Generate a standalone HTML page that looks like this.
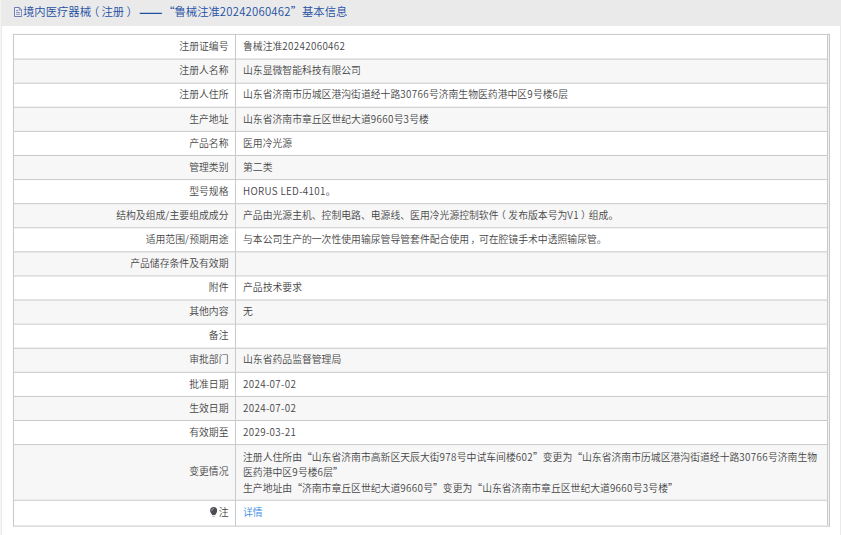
<!DOCTYPE html>
<html lang="zh-CN"><head><meta charset="utf-8"><title>基本信息</title>
<style>
html,body{margin:0;padding:0}
body{width:841px;height:535px;overflow:hidden;background:#eaeaea;position:relative;font-family:"Liberation Sans","Noto Sans CJK SC",sans-serif;font-size:9.83px;color:#454545;font-weight:350}
.n{font-family:"Noto Sans CJK SC","Liberation Sans",sans-serif;letter-spacing:0.33px}
q{quotes:none;font-family:"Noto Sans CJK SC",sans-serif}
q:before,q:after{content:""}
.edge{position:absolute;left:0;top:0;width:1px;height:535px;background:#f4f4f4}
.title{position:absolute;left:23px;top:0;height:24px;line-height:23px;font-size:11.35px;color:#1f4fa3;white-space:nowrap}
.ico{position:absolute;left:13.5px;top:6.8px}
.box{position:absolute;left:2px;top:26px;width:838px;height:509px;background:#fff}
.grid{position:absolute;left:0;top:0}
.r{position:absolute;left:0;width:841px;height:24.1px;white-space:nowrap}
.k{position:absolute;left:14px;top:0;width:214.5px;height:100%;text-align:right;line-height:25.1px}
.v{position:absolute;left:243px;top:0;right:14px;height:100%;line-height:25.1px}
.v.m{line-height:15.5px;padding-top:5.7px;box-sizing:border-box}
.lk{color:#3a8ee6}
.bulb{position:absolute;left:209.7px;top:506.7px}
.pl,.pr{position:relative}
.pl{left:-0.27em}
.pr{left:0.2em}
.d{font-weight:500;margin-left:3.2px;margin-right:4.05px;display:inline-block;transform:scale(1.227,1.5);transform-origin:0 50%}
.title .pl{margin-right:-0.9px}
.sp{letter-spacing:-1.95px}
.title .n{letter-spacing:0.21px}
.cm{position:relative;left:0.15em}
</style></head><body>
<div class="edge"></div>
<svg class="ico" width="8.2" height="10" viewBox="0 0 8.2 10"><path d="M0.45 0.5 H5.3 L7.75 2.95 V9.5 H0.45 Z" fill="#eef0f6" stroke="#56679f" stroke-width="0.85"/><path d="M5.2 0.6 V3.1 H7.7" fill="none" stroke="#56679f" stroke-width="0.7"/><path d="M2 3.5 H4.2 M2 5.4 H6.2 M2 7.3 H6.2" stroke="#6a79ab" stroke-width="0.8"/></svg>
<div class="title">境内医疗器械<span class="pl">（</span>注册<span class="pr">）</span><q class="d">——</q><span class="sp"> </span><q>“</q>鲁械注准<span class="n">20242060462</span><q>”</q>基本信息</div>
<div class="box"></div>

<svg class="grid" width="841" height="535" viewBox="0 0 841 535" shape-rendering="auto">
<rect x="13" y="58.60" width="814" height="24.09" fill="#f7f7f7"/>
<rect x="13" y="106.79" width="814" height="24.09" fill="#f7f7f7"/>
<rect x="13" y="154.98" width="814" height="24.09" fill="#f7f7f7"/>
<rect x="13" y="203.16" width="814" height="24.09" fill="#f7f7f7"/>
<rect x="13" y="251.35" width="814" height="24.09" fill="#f7f7f7"/>
<rect x="13" y="299.54" width="814" height="24.09" fill="#f7f7f7"/>
<rect x="13" y="347.73" width="814" height="24.09" fill="#f7f7f7"/>
<rect x="13" y="395.92" width="814" height="24.09" fill="#f7f7f7"/>
<rect x="13" y="444.10" width="814" height="55.65" fill="#f7f7f7"/>
<rect x="828" y="33.90" width="1" height="491.70" fill="#f3f3f6"/>
<rect x="13" y="33.90" width="817" height="1" fill="#c9c9c9"/>
<rect x="13" y="58.60" width="815" height="1" fill="#c9c9c9"/>
<rect x="13" y="82.69" width="815" height="1" fill="#c9c9c9"/>
<rect x="13" y="106.79" width="815" height="1" fill="#c9c9c9"/>
<rect x="13" y="130.88" width="815" height="1" fill="#c9c9c9"/>
<rect x="13" y="154.98" width="815" height="1" fill="#c9c9c9"/>
<rect x="13" y="179.07" width="815" height="1" fill="#c9c9c9"/>
<rect x="13" y="203.16" width="815" height="1" fill="#c9c9c9"/>
<rect x="13" y="227.26" width="815" height="1" fill="#c9c9c9"/>
<rect x="13" y="251.35" width="815" height="1" fill="#c9c9c9"/>
<rect x="13" y="275.45" width="815" height="1" fill="#c9c9c9"/>
<rect x="13" y="299.54" width="815" height="1" fill="#c9c9c9"/>
<rect x="13" y="323.63" width="815" height="1" fill="#c9c9c9"/>
<rect x="13" y="347.73" width="815" height="1" fill="#c9c9c9"/>
<rect x="13" y="371.82" width="815" height="1" fill="#c9c9c9"/>
<rect x="13" y="395.92" width="815" height="1" fill="#c9c9c9"/>
<rect x="13" y="420.01" width="815" height="1" fill="#c9c9c9"/>
<rect x="13" y="444.10" width="815" height="1" fill="#c9c9c9"/>
<rect x="13" y="499.75" width="815" height="1" fill="#c9c9c9"/>
<rect x="13" y="525.60" width="817" height="1" fill="#c9c9c9"/>
<rect x="13" y="33.90" width="1" height="492.70" fill="#c9c9c9"/>
<rect x="235.0" y="33.90" width="1" height="492.70" fill="#c9c9c9"/>
<rect x="827" y="33.90" width="1" height="491.50" fill="#c9c9c9"/>
<rect x="829" y="33.90" width="1" height="492.70" fill="#c9c9c9"/>
</svg>
<div class="r" style="top:33.65px"><div class="k">注册证编号</div><div class="v">鲁械注准<span class="n">20242060462</span></div></div>
<div class="r" style="top:58.35px"><div class="k">注册人名称</div><div class="v">山东显微智能科技有限公司</div></div>
<div class="r" style="top:82.44px"><div class="k">注册人住所</div><div class="v">山东省济南市历城区港沟街道经十路<span class="n">30766</span>号济南生物医药港中区<span class="n">9</span>号楼<span class="n">6</span>层</div></div>
<div class="r" style="top:106.54px"><div class="k">生产地址</div><div class="v">山东省济南市章丘区世纪大道<span class="n">9660</span>号<span class="n">3</span>号楼</div></div>
<div class="r" style="top:130.63px"><div class="k">产品名称</div><div class="v">医用冷光源</div></div>
<div class="r" style="top:154.73px"><div class="k">管理类别</div><div class="v">第二类</div></div>
<div class="r" style="top:178.82px"><div class="k">型号规格</div><div class="v"><span class="n">HORUS LED-4101</span>。</div></div>
<div class="r" style="top:202.91px"><div class="k">结构及组成<span class="n">/</span>主要组成成分</div><div class="v">产品由光源主机、控制电路、电源线、医用冷光源控制软件<span class="pl">（</span>发布版本号为<span class="n">V1</span><span class="pr">）</span>组成。</div></div>
<div class="r" style="top:227.01px"><div class="k">适用范围<span class="n">/</span>预期用途</div><div class="v">与本公司生产的一次性使用输尿管导管套件配合使用<span class="cm">，</span>可在腔镜手术中透照输尿管。</div></div>
<div class="r" style="top:251.10px"><div class="k">产品储存条件及有效期</div><div class="v"></div></div>
<div class="r" style="top:275.20px"><div class="k">附件</div><div class="v">产品技术要求</div></div>
<div class="r" style="top:299.29px"><div class="k">其他内容</div><div class="v">无</div></div>
<div class="r" style="top:323.38px"><div class="k">备注</div><div class="v"></div></div>
<div class="r" style="top:347.48px"><div class="k">审批部门</div><div class="v">山东省药品监督管理局</div></div>
<div class="r" style="top:371.57px"><div class="k">批准日期</div><div class="v"><span class="n">2024-07-02</span></div></div>
<div class="r" style="top:395.67px"><div class="k">生效日期</div><div class="v"><span class="n">2024-07-02</span></div></div>
<div class="r" style="top:419.76px"><div class="k">有效期至</div><div class="v"><span class="n">2029-03-21</span></div></div>
<div class="r" style="top:443.85px;height:55.65px"><div class="k" style="line-height:56.65px">变更情况</div><div class="v m">注册人住所由<q>“</q>山东省济南市高新区天辰大街<span class="n">978</span>号中试车间楼<span class="n">602</span><q>”</q>变更为<q>“</q>山东省济南市历城区港沟街道经十路<span class="n">30766</span>号济南生物<br>医药港中区<span class="n">9</span>号楼<span class="n">6</span>层<q>”</q><br>生产地址由<q>“</q>济南市章丘区世纪大道<span class="n">9660</span>号<q>”</q>变更为<q>“</q>山东省济南市章丘区世纪大道<span class="n">9660</span>号<span class="n">3</span>号楼<q>”</q></div></div>
<div class="r" style="top:499.50px;height:25.85px"><div class="k" style="line-height:26.85px">注</div><div class="v" style="line-height:26.85px"><span class="lk">详情</span></div></div>
<svg class="bulb" viewBox="0 0 7 10" preserveAspectRatio="none" width="7.3" height="10.3"><path d="M3.5 0.1 C5.5 0.1 6.95 1.6 6.95 3.5 C6.95 5.2 5.7 6.4 5 7.75 H2 C1.3 6.4 0.05 5.2 0.05 3.5 C0.05 1.6 1.5 0.1 3.5 0.1 Z" fill="#4c4c54"/><path d="M1.7 3.6 C1.7 2.5 2.4 1.7 3.4 1.5" fill="none" stroke="#b9b9be" stroke-width="0.8" stroke-linecap="round"/><rect x="2.3" y="8.4" width="2.4" height="1.2" rx="0.4" fill="#b4b4b8"/></svg>
</body></html>
